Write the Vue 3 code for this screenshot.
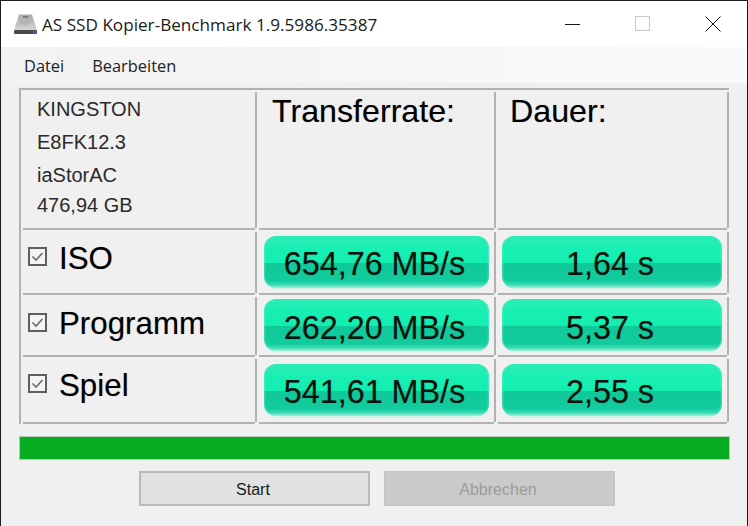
<script setup>
const rows = [
  { name: 'ISO', rate: '654,76 MB/s', time: '1,64 s', cls: 'row-iso' },
  { name: 'Programm', rate: '262,20 MB/s', time: '5,37 s', cls: 'row-prog' },
  { name: 'Spiel', rate: '541,61 MB/s', time: '2,55 s', cls: 'row-spiel' }
]
const info = ['KINGSTON', 'E8FK12.3', 'iaStorAC', '476,94 GB']
</script>

<template>
  <div class="window">
    <header class="titlebar">
      <svg class="app-icon" width="24" height="22" viewBox="0 0 24 22">
        <defs>
          <linearGradient id="drive" x1="0" y1="0" x2="0" y2="1">
            <stop offset="0" stop-color="#a8a8a8" />
            <stop offset="1" stop-color="#d4d4d4" />
          </linearGradient>
        </defs>
        <path d="M5 1.5h13L23 17H0z" fill="url(#drive)" />
        <ellipse cx="11.5" cy="8" rx="6" ry="4" fill="#b4b4b4" />
        <path d="M9 4h5" stroke="#6a6a6a" stroke-width="1.5" />
        <rect x="0" y="17" width="23" height="4" rx="1" fill="#4a4a4a" />
        <rect x="19" y="18" width="3" height="2" fill="#5a5ac8" />
      </svg>
      <span class="title">AS SSD Kopier-Benchmark 1.9.5986.35387</span>
      <div class="controls">
        <svg class="ctl" width="16" height="16" viewBox="0 0 16 16"><path d="M0 8.5h15" stroke="#1a1a1a" fill="none" /></svg>
        <svg class="ctl" width="16" height="16" viewBox="0 0 16 16"><rect x="0.5" y="0.5" width="14" height="14" stroke="#c8c8c8" fill="none" /></svg>
        <svg class="ctl" width="16" height="16" viewBox="0 0 16 16"><path d="M0.5 0.5l15 15M15.5 0.5l-15 15" stroke="#1a1a1a" fill="none" /></svg>
      </div>
    </header>

    <nav class="menu">
      <span>Datei</span>
      <span>Bearbeiten</span>
    </nav>

    <main class="content">
      <section class="table">
        <div class="cell info">
          <div v-for="line in info" :key="line">{{ line }}</div>
        </div>
        <div class="cell heading">Transferrate:</div>
        <div class="cell heading">Dauer:</div>

        <template v-for="row in rows" :key="row.name">
          <div class="cell label" :class="row.cls">
            <span class="check">
              <svg width="19" height="19" viewBox="0 0 19 19">
                <rect x="1" y="1" width="17" height="17" fill="#f4f4f4" stroke="#5e5e5e" stroke-width="2" />
                <path d="M4.5 9.5l3.5 3.5L14.5 6" fill="none" stroke="#6c6c6c" stroke-width="1.6" />
              </svg>
            </span>
            <span>{{ row.name }}</span>
          </div>
          <div class="cell value rate" :class="row.cls"><div class="bar">{{ row.rate }}</div></div>
          <div class="cell value time" :class="row.cls"><div class="bar">{{ row.time }}</div></div>
        </template>
      </section>

      <div class="progress"></div>

      <div class="buttons">
        <button class="btn">Start</button>
        <button class="btn disabled" disabled>Abbrechen</button>
      </div>
    </main>
  </div>
</template>

<style>
html, body { margin: 0; padding: 0; background: #f0f0f0; overflow: hidden; }
</style>

<style scoped>
.window {
  width: 748px;
  height: 526px;
  box-sizing: border-box;
  border-top: 1px solid #1c1c1c;
  border-left: 1px solid #1c1c1c;
  border-right: 1px solid #1c1c1c;
  display: flex;
  flex-direction: column;
  font-family: "Liberation Sans", Arial, sans-serif;
  color: #000;
  background: #f0f0f0;
}
.titlebar {
  height: 46px;
  background: #fff;
  display: flex;
  align-items: center;
  padding-left: 13px;
  flex: none;
}
.app-icon { margin-right: 4px; }
.title {
  font-family: "Open Sans", sans-serif;
  font-size: 17.15px;
  color: #1a1a1a;
}
.controls {
  margin-left: auto;
  display: flex;
  gap: 54px;
  padding-right: 26px;
}
.menu {
  height: 36px;
  flex: none;
  background: linear-gradient(90deg, #f2f2f2, #fafafa);
  display: flex;
  align-items: center;
  gap: 28px;
  padding-left: 23px;
  font-family: "Open Sans", sans-serif;
  font-size: 16.4px;
  color: #222;
}
.content {
  flex: 1;
  padding: 5px 17px 0 18px;
  display: flex;
  flex-direction: column;
}
.table {
  --line: #b2b2b2;
  width: 710px;
  box-sizing: border-box;
  display: grid;
  grid-template-columns: 236px 239px 233px;
  grid-template-rows: 140px 65px 62px 67px;
  border-top: 2px solid var(--line);
  border-left: 2px solid var(--line);
}
.cell {
  box-sizing: border-box;
  margin-left: 2px;
  background:
    linear-gradient(var(--line), var(--line)) left bottom / calc(100% - 2px) 2px no-repeat,
    linear-gradient(var(--line), var(--line)) right 2px / 2px calc(100% - 4px) no-repeat;
}
.info {
  padding: 3px 0 0 14px;
  font-size: 20px;
  color: #2a2a2a;
  line-height: 33px;
}
.info div:last-child { line-height: 26px; }
.heading {
  font-size: 32.2px;
  padding: 1px 0 0 13px;
  line-height: 40px;
  text-shadow: 0 0 1px rgba(0, 0, 0, 0.3);
}
.heading:nth-child(3) { padding-left: 12px; }
.label {
  display: flex;
  align-items: flex-start;
  font-size: 31.3px;
  padding: 11px 0 0 5px;
  gap: 12px;
  line-height: 36px;
  text-shadow: 0 0 1px rgba(0, 0, 0, 0.3);
}
.check { display: block; margin-top: 6px; height: 19px; }
.check svg { display: block; }
.row-prog .check { margin-top: 7px; }
.value {
  padding: 6px 0 0 0;
}
.rate { padding-left: 5px; padding-right: 7px; }
.time { padding-left: 4px; padding-right: 7px; }
.row-prog.value { padding-top: 4px; }
.row-spiel.value { padding-top: 7px; }
.bar {
  height: 52px;
  padding-right: 4px;
  border-radius: 12px;
  background: linear-gradient(180deg,
    #2cecb8 0, #18efb3 24%, #13eeb0 51.5%,
    #10c99b 52%, #12cc9e 86%, #3ddcb4 94%, #a8f0dc 100%);
  box-shadow: 0 2px 2px -1px #c6f3e6, inset 2px 0 2px -1px rgba(120, 240, 205, 0.5), inset -2px 0 2px -1px rgba(120, 240, 205, 0.5);
  text-align: center;
  font-size: 32.3px;
  line-height: 56px;
  color: #04130e;
  text-shadow: 0 0 1px rgba(0, 0, 0, 0.3);
  box-sizing: border-box;
}
.row-prog .bar { line-height: 58px; }
.progress {
  margin-top: 12px;
  width: 711px;
  height: 24px;
  box-sizing: border-box;
  background: #06ac22;
  border: 1px solid #b5c9b5;
  flex: none;
}
.buttons {
  margin-top: 11px;
  margin-left: 120px;
  display: flex;
  gap: 14px;
}
.btn {
  width: 231px;
  height: 35px;
  box-sizing: border-box;
  border: 2px solid #bababa;
  background: #e1e1e1;
  font-family: "Liberation Sans", Arial, sans-serif;
  font-size: 16px;
  color: #1a1a1a;
  padding: 2px 3px 0 0;
}
.btn.disabled {
  background: #cacaca;
  border-color: #c6c6c6;
  color: #9c9c9c;
}
</style>
